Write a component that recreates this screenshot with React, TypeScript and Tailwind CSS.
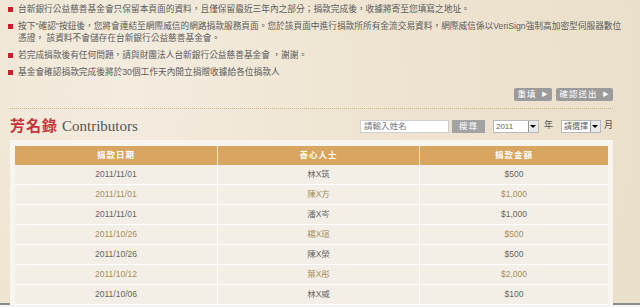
import {useState} from "react";

const notes = [
    ["台新銀行公益慈善基金會只保留本頁面的資料，且僅保留最近三年內之部分；捐款完成後，收據將寄至您填寫之地址。"],
    [
        "按下\"確認\"按鈕後，您將會連結至網際威信的網路捐款服務頁面。您於該頁面中進行捐款所所有金流交易資料，網際威信係以VeriSign強制高加密型伺服器數位",
        "憑證， 該資料不會儲存在台新銀行公益慈善基金會。",
    ],
    ["若完成捐款後有任何問題，請與財團法人台新銀行公益慈善基金會 ，謝謝。"],
    ["基金會確認捐款完成後將於30個工作天內開立捐贈收據給各位捐款人"],
];

const donors = [
    {date: "2011/11/01", name: "林X筑", amount: "$500"},
    {date: "2011/11/01", name: "陳X方", amount: "$1,000"},
    {date: "2011/11/01", name: "潘X岑", amount: "$1,000"},
    {date: "2011/10/26", name: "楊X瑄", amount: "$500"},
    {date: "2011/10/26", name: "陳X榮", amount: "$500"},
    {date: "2011/10/12", name: "葉X彤", amount: "$2,000"},
    {date: "2011/10/06", name: "林X威", amount: "$100"},
];

const cjk = "font-['Liberation_Sans','Noto_Sans_CJK_TC',sans-serif]";

const GrayButton = ({label, width}: {label: string; width: string}) => (
    <button className={`${width} h-[13px] rounded-[2px] bg-[#9b9b9b] text-white text-[8.5px] leading-[13px] flex items-center justify-center gap-[5px] tracking-[1px]`}>
        <span>{label}</span>
        <span className="text-[6px]">▶</span>
    </button>
);

const SelectBox = ({value, width}: {value: string; width: string}) => (
    <div className={`${width} h-[13px] bg-white border border-[#b9b9b9] flex items-center overflow-hidden`}>
        <span className="flex-1 pl-[2px] text-[8px] leading-[11px] text-[#666] whitespace-nowrap overflow-hidden">{value}</span>
        <div className="w-[10px] h-[11px] shrink-0 border-l border-[#999] bg-[#e9e9e9] flex items-center justify-center">
            <div className="w-0 h-0 border-l-[3px] border-r-[3px] border-t-[3px] border-l-transparent border-r-transparent border-t-black"/>
        </div>
    </div>
);

const App = () => {
    const [name, setName] = useState("");

    return (
        <div className={`w-[640px] h-[307px] overflow-hidden bg-[#f4f4f4] ${cjk}`}>
            <div className="h-[305px] border-b-2 border-[#8c8c8c] bg-[#eee5d3] bg-[radial-gradient(circle_at_20%_30%,#f3ecdf_0%,#eee4d1_45%,#e9dfca_100%)] pt-[3px] pl-[8px]">
                <ul className="flex flex-col gap-[5px]">
                    {notes.map((lines, i) => (
                        <li key={i} className="flex gap-[5px]">
                            <span className="mt-[4px] w-[5px] h-[5px] bg-[#c8202a] shrink-0"/>
                            <p className="text-[8.7px] leading-[12px] text-[#5c5c5c] whitespace-nowrap">
                                {lines.map((l, j) => (
                                    <span key={j}>{l}{j < lines.length - 1 && <br/>}</span>
                                ))}
                            </p>
                        </li>
                    ))}
                </ul>

                <div className="ml-[2px] w-[603px]">
                    <div className="mt-[10px] flex justify-end gap-[4px]">
                        <GrayButton label="重填" width="w-[38px]"/>
                        <GrayButton label="確認送出" width="w-[57px]"/>
                    </div>

                    <div className="mt-[7px] border-t border-dotted border-[#cfb489]"/>

                    <div className="mt-[8px] h-[18px] flex items-center justify-between">
                        <div className="flex items-baseline gap-[4px]">
                            <span className="text-[15px] font-bold text-[#c7323b] tracking-[1px] font-['Noto_Sans_CJK_TC',serif]">芳名錄</span>
                            <span className="text-[15px] text-[#555] font-['Liberation_Serif',serif]">Contributors</span>
                        </div>
                        <div className="flex items-center">
                            <input
                                value={name}
                                onChange={e => setName(e.target.value)}
                                placeholder="請輸入姓名"
                                className="w-[89px] h-[13px] bg-white border border-[#cfcfcf] px-[3px] text-[8.5px] text-[#666] placeholder:text-[#777] outline-none"
                            />
                            <button className="ml-[3px] w-[33px] h-[13px] bg-[#a3a3a3] text-white text-[8.5px] leading-[13px] tracking-[1px]">搜尋</button>
                            <div className="ml-[8px]"><SelectBox value="2011" width="w-[46px]"/></div>
                            <span className="ml-[5px] text-[9px] text-[#555]">年</span>
                            <div className="ml-[8px]"><SelectBox value="請選擇" width="w-[40px]"/></div>
                            <span className="ml-[3px] text-[9px] text-[#555]">月</span>
                        </div>
                    </div>

                    <div className="mt-[5px] bg-[#f8f5ee] px-[5px] pt-[6px]">
                        <div className="grid grid-cols-[203px_202px_1fr] bg-[#d8a660] h-[19px] text-white text-[8.5px] font-bold tracking-[1px]">
                            <div className="border-r border-[#f3e6d0] flex items-center justify-center">捐款日期</div>
                            <div className="border-r border-[#f3e6d0] flex items-center justify-center">善心人士</div>
                            <div className="flex items-center justify-center">捐款金額</div>
                        </div>
                        {donors.map((d, i) => (
                            <div
                                key={i}
                                className={`grid grid-cols-[203px_202px_1fr] h-[20px] bg-[#f3efe6] border-b border-white text-[8.5px] ${i % 2 ? "text-[#a68d5c]" : "text-[#666]"}`}
                            >
                                <div className="border-r border-white flex items-center justify-center">{d.date}</div>
                                <div className="border-r border-white flex items-center justify-center">{d.name}</div>
                                <div className="flex items-center justify-center">{d.amount}</div>
                            </div>
                        ))}
                    </div>
                </div>
            </div>
        </div>
    );
};

export default App;
